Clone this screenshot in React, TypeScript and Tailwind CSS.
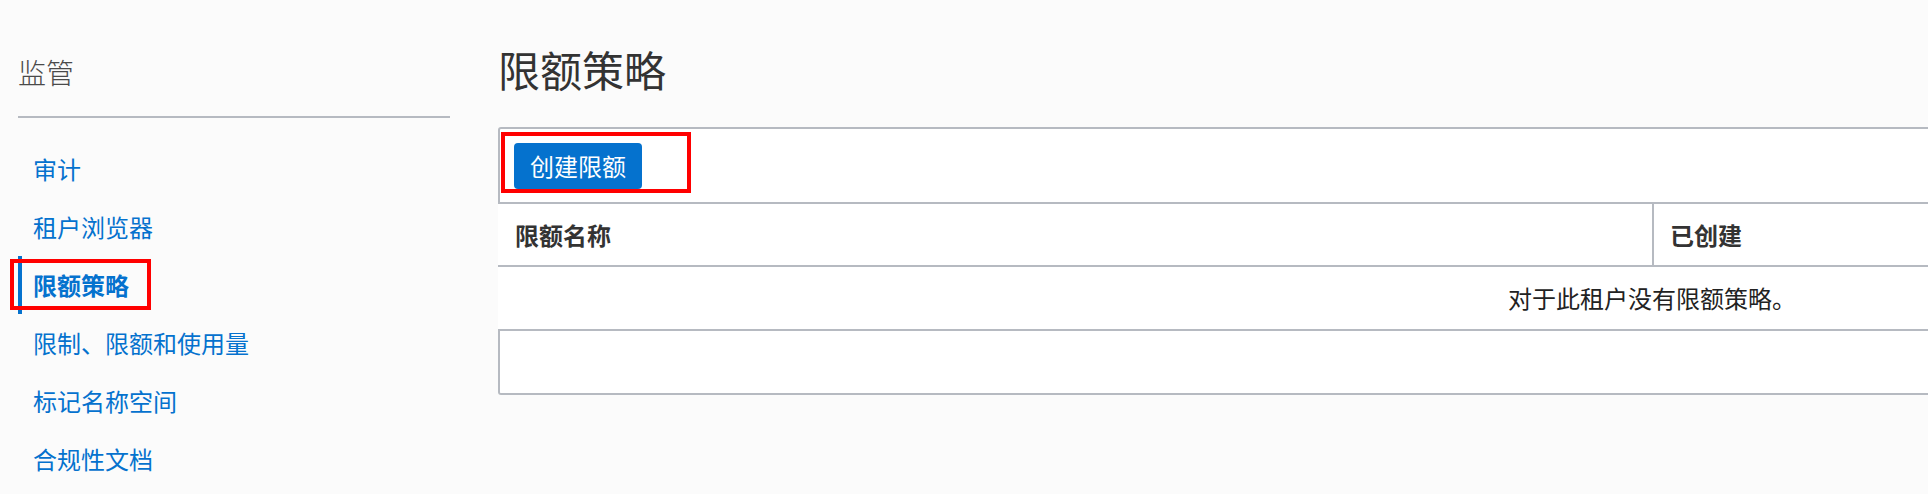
const NAV_ITEMS = ['审计', '租户浏览器', '限额策略', '限制、限额和使用量', '标记名称空间', '合规性文档'];
const ACTIVE = '限额策略';

function Sidebar() {
  return (
    <aside className="ml-[18px] w-[432px] shrink-0 pt-[52px]">
      <h2 className="text-[28px] leading-[40px] font-light text-[#4a4a4a]">监管</h2>
      <div className="mt-[24px] h-[2px] bg-[#b6bac1]" />
      <ul className="mt-[22px]">
        {NAV_ITEMS.map((item) => {
          const active = item === ACTIVE;
          return (
            <li
              key={item}
              className={`relative flex h-[58px] items-center border-l-4 pl-[11px] text-[24px] text-[#0572ce] ${
                active ? 'border-[#0572ce] font-bold' : 'border-transparent'
              }`}
            >
              {item}
              {active && (
                <span className="pointer-events-none absolute left-[-12px] top-[3px] h-[51px] w-[141px] border-4 border-[#ff0000]" />
              )}
            </li>
          );
        })}
      </ul>
    </aside>
  );
}

function QuotaTable() {
  return (
    <div className="mt-[33px] w-[2308px]">
      <div className="relative flex h-[77px] items-center rounded-t-[3px] border-2 border-[#b6bac1] bg-white pl-[14px]">
        <button className="h-[46px] rounded-[4px] bg-[#0572ce] px-4 text-[24px] text-white">创建限额</button>
        <span className="pointer-events-none absolute left-[1px] top-[3px] h-[61px] w-[190px] border-4 border-[#ff0000]" />
      </div>
      <div className="grid grid-cols-2 border-b-2 border-[#b6bac1] bg-white">
        <div className="flex h-[61px] items-center pl-[17px] text-[24px] font-bold text-[#333]">限额名称</div>
        <div className="flex h-[61px] items-center border-l-2 border-[#b6bac1] pl-[16px] text-[24px] font-bold text-[#333]">
          已创建
        </div>
      </div>
      <div className="flex h-[64px] items-center justify-center border-b-2 border-[#b6bac1] bg-white text-[24px] text-[#222]">
        对于此租户没有限额策略。
      </div>
      <div className="h-[64px] rounded-b-[3px] border-2 border-t-0 border-[#b6bac1] bg-white" />
    </div>
  );
}

export default function App() {
  return (
    <div className="flex h-[494px] w-full overflow-hidden bg-[#fbfbfb] font-['Noto_Sans_CJK_SC','Noto_Sans',sans-serif]">
      <Sidebar />
      <main className="shrink-0 pl-[48px] pt-[44px]">
        <h1 className="text-[42px] leading-[50px] font-normal text-[#333]">限额策略</h1>
        <QuotaTable />
      </main>
    </div>
  );
}
